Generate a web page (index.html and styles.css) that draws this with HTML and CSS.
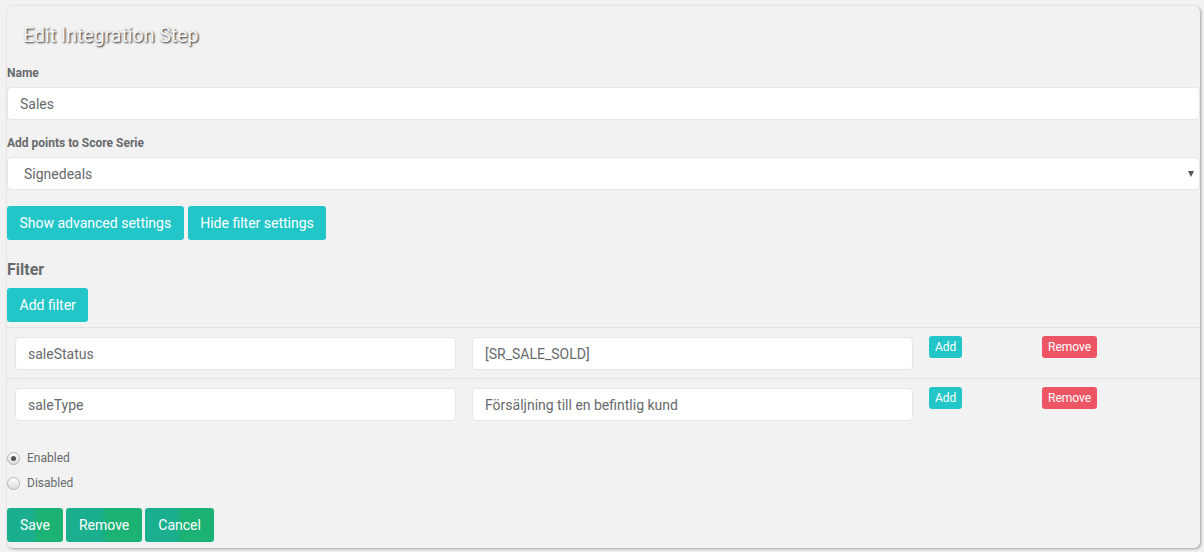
FILE: index.html
```html
<!DOCTYPE html>
<html lang="en">
<head>
    <meta charset="UTF-8">
    <meta name="viewport" content="width=device-width, initial-scale=1.0">
    <title>Edit Integration Step</title>
    <link rel="stylesheet" href="styles.css">
</head>
<body>
    <div class="card">
        <h1 class="card-title">Edit Integration Step</h1>

        <label class="field-label" for="step-name">Name</label>
        <input type="text" id="step-name" class="field" value="Sales">

        <label class="field-label" for="score-serie">Add points to Score Serie</label>
        <div class="select-wrap">
            <select id="score-serie" class="field">
                <option>Signedeals</option>
            </select>
        </div>

        <div class="btn-row">
            <button class="btn btn-info">Show advanced settings</button>
            <button class="btn btn-info">Hide filter settings</button>
        </div>

        <h2 class="section-title">Filter</h2>
        <button class="btn btn-info">Add filter</button>

        <div class="filters">
            <div class="filter-row">
                <div class="cell"><input type="text" class="field" value="saleStatus"></div>
                <div class="cell"><input type="text" class="field" value="[SR_SALE_SOLD]"></div>
                <div class="cell"><button class="btn btn-xs btn-info">Add</button></div>
                <div class="cell"><button class="btn btn-xs btn-danger">Remove</button></div>
            </div>
            <div class="filter-row">
                <div class="cell"><input type="text" class="field" value="saleType"></div>
                <div class="cell"><input type="text" class="field" value="Försäljning till en befintlig kund"></div>
                <div class="cell"><button class="btn btn-xs btn-info">Add</button></div>
                <div class="cell"><button class="btn btn-xs btn-danger">Remove</button></div>
            </div>
        </div>

        <div class="radios">
            <label class="radio"><input type="radio" name="state" checked> Enabled</label>
            <label class="radio"><input type="radio" name="state"> Disabled</label>
        </div>

        <div class="btn-row btn-row-footer">
            <button class="btn btn-primary">Save</button>
            <button class="btn btn-primary">Remove</button>
            <button class="btn btn-primary">Cancel</button>
        </div>
    </div>
</body>
</html>
```

FILE: styles.css
```css
body {
    font-family: Roboto, 'Liberation Sans', sans-serif;
    background-color: #f2f2f2;
    color: #676a6c;
    margin: 0;
    padding: 6px 4px 4px 7px;
}

.card {
    background-color: #f2f2f2;
    border-radius: 6px;
    box-shadow: 1px 1px 3px rgba(0, 0, 0, 0.35);
    padding: 0 0 5px 0;
    height: 542px;
    box-sizing: border-box;
}

.card-title {
    margin: 0;
    padding: 18px 16px 14px;
    font-size: 19.5px;
    font-weight: 400;
    color: #f8f8f8;
    text-shadow: 1px 1px 2px #222;
    line-height: 23px;
}

.field-label {
    display: block;
    font-size: 12px;
    font-weight: bold;
    color: #676a6c;
    margin: 5px 0 7px;
    line-height: 14px;
}

.field {
    display: block;
    width: 100%;
    box-sizing: border-box;
    height: 33px;
    padding: 0 12px;
    border: 1px solid #e5e6e7;
    border-radius: 4px;
    background-color: #fff;
    font-family: inherit;
    font-size: 14px;
    color: #676a6c;
    margin: 0 0 16px;
}

.select-wrap {
    position: relative;
}

.select-wrap select {
    appearance: none;
    -webkit-appearance: none;
    padding-left: 16px;
}

.select-wrap::after {
    content: "";
    position: absolute;
    right: 6px;
    top: 14px;
    border-left: 3px solid transparent;
    border-right: 3px solid transparent;
    border-top: 6px solid #555;
}

.btn-row {
    display: flex;
    gap: 4px;
}

.btn-row-footer {
    gap: 3px;
}

.btn {
    font-family: inherit;
    font-size: 14px;
    color: #fff;
    border: none;
    border-radius: 3px;
    height: 34px;
    padding: 0 12.5px;
    cursor: pointer;
}

.btn-info {
    background-color: #23c6c8;
}

.btn-danger {
    background-color: #ed5565;
}

.btn-primary {
    padding: 0 13px;
    background: linear-gradient(90deg, #1aaf8f 0%, #1aaf8f 45%, #1bb273 55%, #1bb273 100%);
}

.btn-xs {
    height: 22px;
    font-size: 12px;
    padding: 0 6px;
    border-radius: 3px;
}

.section-title {
    font-size: 16px;
    font-weight: bold;
    margin: 21px 0 9px;
    line-height: 18px;
}

.filters {
    margin-top: 5px;
}

.filter-row {
    display: grid;
    grid-template-columns: 457px 457px 113px 1fr;
    border-top: 1px solid #e3e3e3;
}

.cell {
    padding: 8px;
}

.cell .field {
    margin: 1px 0 0;
}

.radios {
    margin-top: 20px;
    display: flex;
    flex-direction: column;
    gap: 7px;
}

.radio {
    display: flex;
    align-items: center;
    gap: 7px;
    font-size: 12px;
    line-height: 18px;
    color: #676a6c;
}

.radio input {
    appearance: none;
    -webkit-appearance: none;
    margin: 0;
    width: 13px;
    height: 13px;
    border-radius: 50%;
    border: 1px solid #b5b5b5;
    background: linear-gradient(#fdfdfd, #dcdcdc);
    box-sizing: border-box;
    position: relative;
}

.radio input:checked::after {
    content: "";
    position: absolute;
    left: 3px;
    top: 3px;
    width: 5px;
    height: 5px;
    border-radius: 50%;
    background-color: #555;
}

.radios + .btn-row {
    margin-top: 16px;
}
```
